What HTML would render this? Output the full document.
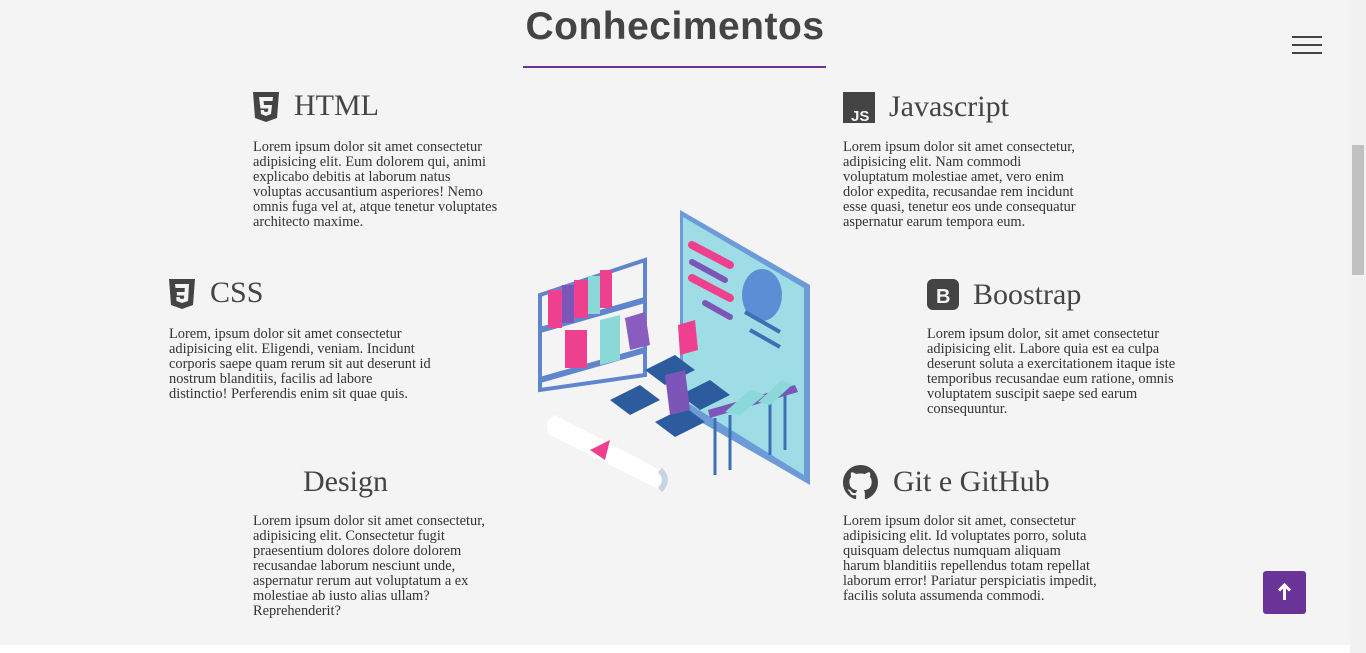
<!DOCTYPE html>
<html><head><meta charset="utf-8"><style>
html,body{margin:0;padding:0}
body{width:1366px;height:653px;background:#f4f4f4;position:relative;overflow:hidden;font-family:"Liberation Serif",serif;color:#333}
h1{position:absolute;left:0;width:1350px;top:5px;margin:0;text-align:center;font-family:"Liberation Sans",sans-serif;font-weight:bold;font-size:39px;color:#444;letter-spacing:0.5px}
.line{position:absolute;left:523px;top:66px;width:303px;height:2px;background:#6a3397}
.t{font-size:30px;color:#444;position:absolute;white-space:nowrap}
.p{position:absolute;font-size:14.4px;line-height:15px;color:#333}
.ic{position:absolute}
.sb{position:absolute;right:0;top:0;width:16px;height:653px;background:#f1f1f1}
.sb div{position:absolute;left:2px;top:145px;width:12px;height:130px;background:#c1c1c1}
.bot{position:absolute;left:0;top:645px;width:1350px;height:8px;background:#fff}
.up{position:absolute;left:1263px;top:571px;width:43px;height:43px;background:#6a3397;border-radius:3px}
</style></head><body>
<h1>Conhecimentos</h1>
<div class="line"></div>
<div style="position:absolute;left:1292px;top:36px;width:30px;height:2px;background:#444"></div>
<div style="position:absolute;left:1292px;top:44px;width:30px;height:2px;background:#444"></div>
<div style="position:absolute;left:1292px;top:52px;width:30px;height:2px;background:#444"></div>

<svg class="ic" style="left:253px;top:92px" width="26" height="30" viewBox="0 0 26 30"><path d="M0 0H26L24 26L13 30L2 26Z" fill="#444"/><path d="M6 5H20L19.5 9H10.5L11 13H19L18 22L13 24L8 22L7.7 18H11L11.2 19.5L13 20L15 19.5L15.3 16.5H7.5Z" fill="#f4f4f4"/></svg>
<div class="t" style="left:294px;top:89px">HTML</div>
<div class="p" style="left:253px;top:140px;width:248px">Lorem ipsum dolor sit amet consectetur adipisicing elit. Eum dolorem qui, animi explicabo debitis at laborum natus voluptas accusantium asperiores! Nemo omnis fuga vel at, atque tenetur voluptates architecto maxime.</div>

<svg class="ic" style="left:169px;top:279px" width="26" height="30" viewBox="0 0 26 30"><path d="M0 0H26L24 26L13 30L2 26Z" fill="#444"/><path d="M6 5H20L19 22L13 24L7.5 22L7.3 18H10.7L11 19.5L13 20L15 19.5L15.3 16.5H8L7.7 13H15.6L15.8 9H6.5Z" fill="#f4f4f4"/></svg>
<div class="t" style="left:210px;top:276px">CSS</div>
<div class="p" style="left:169px;top:327px;width:262px">Lorem, ipsum dolor sit amet consectetur adipisicing elit. Eligendi, veniam. Incidunt corporis saepe quam rerum sit aut deserunt id nostrum blanditiis, facilis ad labore distinctio! Perferendis enim sit quae quis.</div>

<div class="t" style="left:303px;top:465px">Design</div>
<div class="p" style="left:253px;top:514px;width:245px">Lorem ipsum dolor sit amet consectetur, adipisicing elit. Consectetur fugit praesentium dolores dolore dolorem recusandae laborum nesciunt unde, aspernatur rerum aut voluptatum a ex molestiae ab iusto alias ullam? Reprehenderit?</div>

<svg class="ic" style="left:843px;top:92px" width="32" height="31" viewBox="0 0 32 31"><rect width="32" height="31" fill="#444"/><text x="8" y="29" font-family="Liberation Sans" font-weight="bold" font-size="15" fill="#f4f4f4">JS</text></svg>
<div class="t" style="left:889px;top:90px">Javascript</div>
<div class="p" style="left:843px;top:140px;width:245px">Lorem ipsum dolor sit amet consectetur, adipisicing elit. Nam commodi voluptatum molestiae amet, vero enim dolor expedita, recusandae rem incidunt esse quasi, tenetur eos unde consequatur aspernatur earum tempora eum.</div>

<svg class="ic" style="left:927px;top:279px" width="32" height="31" viewBox="0 0 32 31"><rect width="32" height="31" rx="6" fill="#444"/><text x="9" y="24" font-family="Liberation Sans" font-weight="bold" font-size="20" fill="#f4f4f4">B</text></svg>
<div class="t" style="left:973px;top:278px">Boostrap</div>
<div class="p" style="left:927px;top:327px;width:250px">Lorem ipsum dolor, sit amet consectetur adipisicing elit. Labore quia est ea culpa deserunt soluta a exercitationem itaque iste temporibus recusandae eum ratione, omnis voluptatem suscipit saepe sed earum consequuntur.</div>

<svg class="ic" style="left:843px;top:465px" width="35" height="35" viewBox="0 0 16 16"><path fill="#444" d="M8 0C3.58 0 0 3.58 0 8c0 3.54 2.29 6.53 5.47 7.59.4.07.55-.17.55-.38 0-.19-.01-.82-.01-1.490-2.01.37-2.53-.49-2.69-.94-.09-.23-.48-.94-.82-1.13-.28-.15-.68-.52-.01-.53.63-.01 1.080.58 1.23.82.72 1.21 1.87.87 2.33.66.07-.52.28-.87.51-1.07-1.78-.2-3.64-.89-3.64-3.95 0-.87.31-1.59.82-2.15-.08-.2-.36-1.020.08-2.12 0 0 .67-.21 2.2.82.64-.18 1.32-.27 2-.27.68 0 1.36.09 2 .27 1.53-1.04 2.2-.82 2.2-.82.44 1.1.16 1.92.08 2.12.51.56.82 1.27.82 2.15 0 3.07-1.87 3.75-3.65 3.95.29.25.54.73.54 1.48 0 1.07-.01 1.93-.01 2.2 0 .21.15.46.55.38A8.013 8.013 0 0016 8c0-4.42-3.58-8-8-8z"/></svg>
<div class="t" style="left:893px;top:465px">Git e GitHub</div>
<div class="p" style="left:843px;top:514px;width:255px">Lorem ipsum dolor sit amet, consectetur adipisicing elit. Id voluptates porro, soluta quisquam delectus numquam aliquam harum blanditiis repellendus totam repellat laborum error! Pariatur perspiciatis impedit, facilis soluta assumenda commodi.</div>

<svg style="position:absolute;left:530px;top:200px" width="290" height="300" viewBox="0 0 290 300">
<polygon points="150,10 280,85 280,285 150,210" fill="#6d9bd8"/>
<polygon points="153,17 274,88 274,275 153,200" fill="#9fdde6"/>
<path d="M162 45 L200 65 M162 78 L200 98" stroke="#ef3f8f" stroke-width="8" stroke-linecap="round"/>
<path d="M162 62 L195 80 M175 103 L200 117" stroke="#7c55b8" stroke-width="6" stroke-linecap="round"/>
<ellipse cx="232" cy="95" rx="20" ry="26" fill="#5a8fd6"/>
<path d="M215 112 L250 132 M220 130 L250 147" stroke="#3d6fb5" stroke-width="4"/>
<path d="M10 95 L115 60 L115 175 L10 190Z" fill="none" stroke="#5f86cc" stroke-width="4"/>
<path d="M10 130 L115 100 M10 180 L115 150" stroke="#5f86cc" stroke-width="6"/>
<rect x="18" y="90" width="14" height="38" fill="#ef3f8f"/><rect x="32" y="85" width="12" height="38" fill="#7c55b8"/><rect x="44" y="80" width="14" height="38" fill="#ef3f8f"/><rect x="58" y="76" width="12" height="38" fill="#8ad8d8"/><rect x="70" y="70" width="12" height="38" fill="#ef3f8f"/>
<rect x="35" y="130" width="22" height="38" fill="#ef3f8f"/>
<path d="M70 120 L90 115 L90 160 L70 165Z" fill="#8ad8d8"/>
<path d="M95 118 L115 112 L120 145 L100 150Z" fill="#8a5cc0"/>
<path d="M148 125 L165 120 L168 150 L150 155Z" fill="#ef3f8f"/>
<path d="M80 200 L110 185 L130 200 L100 215Z M150 195 L180 180 L200 195 L170 210Z M125 222 L155 207 L175 222 L145 237Z M115 170 L145 155 L165 170 L135 185Z" fill="#2c5c9e"/>
<path d="M135 175 L155 170 L160 210 L140 215Z" fill="#7c55b8"/>
<path d="M178 210 L265 185 L268 192 L180 218Z" fill="#7c55b8"/>
<path d="M185 218 L185 275 M200 215 L200 270 M255 195 L255 250 M240 200 L240 255" stroke="#3d6fb5" stroke-width="3"/>
<path d="M195 212 L220 190 L235 195 L210 215Z M228 202 L252 180 L262 185 L240 205Z" fill="#8ad8d8"/>
<path d="M25 215 L130 270 Q140 280 130 290 L20 235 Q12 222 25 215Z" fill="#fff"/>
<path d="M130 270 Q140 280 130 290" stroke="#c8d4e8" stroke-width="6" fill="none"/>
<path d="M60 250 L80 240 L75 260Z" fill="#ef3f8f"/>
</svg>

<div class="up"><svg width="43" height="43" viewBox="0 0 43 43"><path d="M21.5 14V29M16 19.5L21.5 14L27 19.5" stroke="#fff" stroke-width="3" fill="none"/></svg></div>
<div class="bot"></div>
<div class="sb"><div></div></div>
</body></html>
